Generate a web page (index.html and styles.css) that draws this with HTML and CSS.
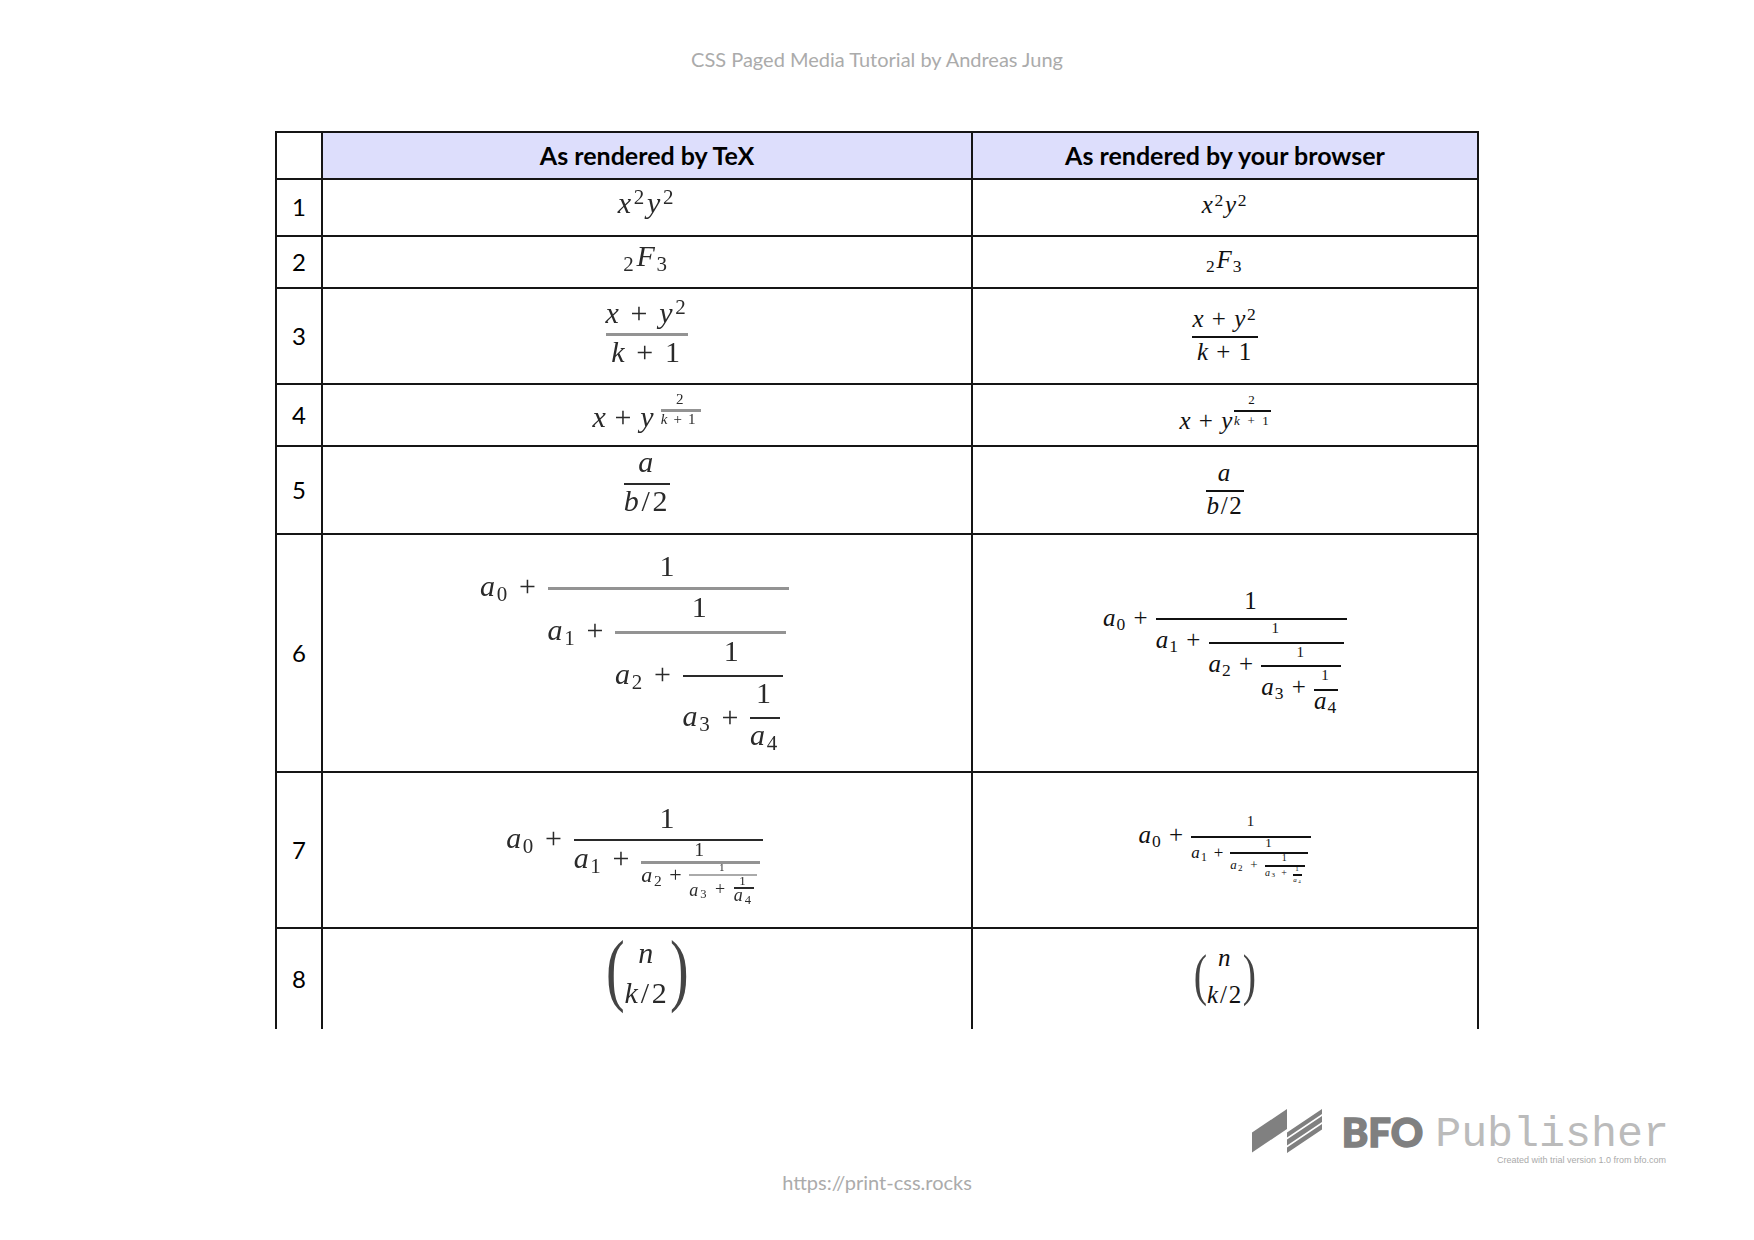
FILE: index.html
```html
<!DOCTYPE html>
<html lang="en">
<head>
<meta charset="utf-8">
<title>CSS Paged Media Tutorial</title>
<link rel="stylesheet" href="styles.css">
</head>
<body>
<div class="page">
  <header class="running">CSS Paged Media Tutorial by Andreas Jung</header>
  <table class="sheet">
    <colgroup><col class="c0"><col class="c1"><col class="c2"></colgroup>
    <tr class="h0"><th class="blank"></th><th>As rendered by TeX</th><th>As rendered by your browser</th></tr>
    <tr class="h1"><td class="n">1</td>
      <td class="tex p7"><i>x</i><span class="sp">2</span><i>y</i><span class="sp">2</span></td>
      <td class="mml p12"><i>x</i><span class="sp">2</span><i>y</i><span class="sp">2</span></td></tr>
    <tr class="h2"><td class="n">2</td>
      <td class="tex p4"><span class="sb">2</span><i>F</i><span class="sb">3</span></td>
      <td class="mml p10"><span class="sb">2</span><i>F</i><span class="sb">3</span></td></tr>
    <tr class="h3"><td class="n">3</td>
      <td class="tex p8"><span class="frac"><span class="num nq"><i>x</i><span class="op">+</span><i>y</i><span class="sp">2</span></span><span class="den bar-g"><i>k</i><span class="op">+</span>1</span></span></td>
      <td class="mml p17"><span class="frac"><span class="num"><i>x</i><span class="op">+</span><i>y</i><span class="sp">2</span></span><span class="den"><i>k</i><span class="op">+</span>1</span></span></td></tr>
    <tr class="h4"><td class="n">4</td>
      <td class="tex p7"><i>x</i><span class="op op2">+</span><i>y</i><span class="frac sf"><span class="num">2</span><span class="den bar-g"><i>k</i>+1</span></span></td>
      <td class="mml p8"><i>x</i><span class="op">+</span><i>y</i><span class="frac sf"><span class="num">2</span><span class="den"><i>k</i><span class="op">+</span>1</span></span></td></tr>
    <tr class="h5"><td class="n">5</td>
      <td class="tex p0"><span class="frac"><span class="num"><i>a</i></span><span class="den last"><i>b</i>/2</span></span></td>
      <td class="mml p13"><span class="frac"><span class="num"><i>a</i></span><span class="den"><i>b</i>/2</span></span></td></tr>
    <tr class="h6"><td class="n">6</td>
      <td class="tex p16 off"><i>a</i><span class="sb">0</span><span class="op">+</span><span class="frac"><span class="num">1</span><span class="den bar-g"><i>a</i><span class="sb">1</span><span class="op">+</span><span class="frac nest"><span class="num">1</span><span class="den bar-g"><i>a</i><span class="sb">2</span><span class="op">+</span><span class="frac nest"><span class="num">1</span><span class="den"><i>a</i><span class="sb">3</span><span class="op">+</span><span class="frac nest"><span class="num">1</span><span class="den last"><i>a</i><span class="sb">4</span></span></span></span></span></span></span></span></span></td>
      <td class="mml p53"><i>a</i><span class="sb">0</span><span class="op">+</span><span class="frac"><span class="num">1</span><span class="den"><i>a</i><span class="sb">1</span><span class="op">+</span><span class="frac nest low"><span class="num sm">1</span><span class="den"><i>a</i><span class="sb">2</span><span class="op">+</span><span class="frac nest low"><span class="num sm">1</span><span class="den"><i>a</i><span class="sb">3</span><span class="op">+</span><span class="frac nest low"><span class="num sm">1</span><span class="den last"><i>a</i><span class="sb">4</span></span></span></span></span></span></span></span></td></tr>
    <tr class="h7"><td class="n">7</td>
      <td class="tex p30 off"><i>a</i><span class="sb">0</span><span class="op">+</span><span class="frac"><span class="num">1</span><span class="den"><i>a</i><span class="sb">1</span><span class="op">+</span><span class="frac nest t2"><span class="num">1</span><span class="den bar-g"><i>a</i><span class="sb">2</span><span class="op">+</span><span class="frac nest t3"><span class="num">1</span><span class="den bar-l"><i>a</i><span class="sb">3</span><span class="op">+</span><span class="frac nest t4"><span class="num">1</span><span class="den"><i>a</i><span class="sb">4</span></span></span></span></span></span></span></span></span></td>
      <td class="mml p41"><i>a</i><span class="sb">0</span><span class="op">+</span><span class="frac u1"><span class="num">1</span><span class="den"><i>a</i><span class="sb">1</span><span class="op">+</span><span class="frac nest u2"><span class="num">1</span><span class="den"><i>a</i><span class="sb">2</span><span class="op">+</span><span class="frac nest u3"><span class="num">1</span><span class="den"><i>a</i><span class="sb">3</span><span class="op">+</span><span class="frac nest u4"><span class="num">1</span><span class="den"><i>a</i><span class="sb">4</span></span></span></span></span></span></span></span></td></tr>
    <tr class="h8"><td class="n">8</td>
      <td class="tex p9"><span class="binom"><span class="pl">(</span><span class="stack"><i>n</i><span class="k"><i>k</i>/2</span></span><span class="pr">)</span></span></td>
      <td class="mml p16"><span class="binom"><span class="pl">(</span><span class="stack"><i>n</i><span class="k"><i>k</i>/2</span></span><span class="pr">)</span></span></td></tr>
  </table>
  <div class="brand">
    <div class="brand-main">
      <svg class="mark" width="70" height="44" viewBox="0 0 70 44" aria-hidden="true">
        <path fill="#808080" d="M0 23.5 35 0V20L0 43.5Z"/>
        <path fill="#808080" d="M35 23.5 70 0V5L35 28.5ZM35 30.5 70 7V13L35 36.5ZM35 38.5 70 15V20.5L35 44Z"/>
      </svg>
      <span class="bfo">BFO</span><span class="pub">Publisher</span>
    </div>
    <div class="trial">Created with trial version 1.0 from bfo.com</div>
  </div>
  <footer class="url">https://print-css.rocks</footer>
</div>
</body>
</html>
```
FILE: styles.css
```css
html, body { margin: 0; padding: 0; background: #fff; }
.page { width: 1754px; height: 1240px; overflow: hidden; font-family: Lato, "Liberation Sans", sans-serif; }
.running { height: 131px; box-sizing: border-box; padding-top: 47px; text-align: center; font-size: 20px; line-height: 24px; color: #ababab; }
.url { margin-top: 5px; text-align: center; font-size: 20px; line-height: 24px; color: #ababab; }

.sheet { border-collapse: collapse; table-layout: fixed; width: 1202px; margin-left: 275px; color: #000; }
.c0 { width: 46px; } .c1 { width: 650px; } .c2 { width: 506px; }
.sheet th, .sheet td { border: 2px solid #151515; padding: 0; text-align: center; }
.sheet th { background: #dddefc; font-size: 25px; font-weight: 700; padding-bottom: 2px; }
.sheet th.blank { background: #fff; }
.h8 td { border-bottom: 0; }
.h0 { height: 47px; } .h1 { height: 57px; } .h2 { height: 52px; } .h3 { height: 96px; }
.h4 { height: 62px; } .h5 { height: 88px; } .h6 { height: 238px; } .h7 { height: 156px; } .h8 { height: 101px; }
.sheet .n { font-size: 24px; vertical-align: middle; padding-bottom: 2px; }

.sheet .tex, .sheet .mml { vertical-align: top; font-family: "Liberation Serif", serif; white-space: nowrap; line-height: 1; }
.sheet .tex { font-size: 30px; color: #2a2a2a; letter-spacing: .09em; }
.sheet .mml { font-size: 25px; color: #111; letter-spacing: .07em; }
.tex > * { filter: blur(.35px); }
.off { padding-right: 25px !important; }

.p0 { padding-top: 0 !important; } .p4 { padding-top: 4px !important; } .p7 { padding-top: 7px !important; }
.p8 { padding-top: 8px !important; } .p9 { padding-top: 9px !important; } .p10 { padding-top: 10px !important; } .p12 { padding-top: 12px !important; } .p13 { padding-top: 13px !important; }
.p16 { padding-top: 16px !important; } .p17 { padding-top: 17px !important; } .p30 { padding-top: 30px !important; }
.p41 { padding-top: 41px !important; } .p53 { padding-top: 53px !important; }

.sp, .sb { font-size: .7em; font-style: normal; }
.sp { vertical-align: .42em; }
.sb { vertical-align: -.22em; margin-left: -.05em; }
.op { margin: 0 .3em; font-style: normal; }
.op.op2 { margin: 0 .2em; }
.mml .op { margin: 0 .26em; }

.frac { display: inline-flex; flex-direction: column; text-align: center; line-height: 1; vertical-align: .68em; }
.num { display: block; padding-bottom: .2em; }
.num.nq { padding-bottom: .16em; }
.den { display: block; border-top: 2px solid currentColor; padding-top: .06em; white-space: nowrap; }
.den.last { padding-top: .03em; }
.bar-g { border-top: 3px solid #939393; }
.bar-l { border-top-color: #aaa; }
.nest { margin-right: 3px; }
.tex .nest { vertical-align: .78em; }
.nest > .num { padding-bottom: .3em; }
.mml .frac { vertical-align: .68em; }
.mml .num { padding-bottom: .2em; }
.mml .den { padding-top: .04em; }
.mml .den.last { padding-top: 0; line-height: .8; }
.mml .low { vertical-align: .6em; }
.mml .num.sm { font-size: .6em; padding-bottom: .38em; }

/* exponent fractions in row 4 */
.tex .sf { font-size: .5em; vertical-align: 1.53em; margin-left: .3em; }
.tex .sf > .num { padding-bottom: .1em; }
.tex .sf > .den { padding-top: 0; letter-spacing: .4em; }
.mml .sf { font-size: .52em; vertical-align: 1.92em; margin-left: 0; }
.mml .sf > .num { padding-bottom: .3em; }
.mml .sf > .den { padding-top: .15em; }
.mml .sf .op { margin: 0 .45em; }

/* shrinking levels of the compact continued fraction, TeX side */
.tex .t2 { font-size: 22px; vertical-align: .56em; }
.t2 > .num { font-size: .9em; line-height: .7; padding-bottom: .24em; }
.t2 > .den { padding-top: 0; line-height: .7; }
.t2 > .den > .op { margin: 0 .22em; }
.tex .t3 { font-size: 18px; vertical-align: .6em; }
.t3 > .num { font-size: .62em; line-height: .7; padding-bottom: .12em; }
.t3 > .den { padding-top: 0; }
.t3 > .den > .op { margin: 0 .32em; }
.tex .t4 { font-size: 18px; vertical-align: .6em; }
.t4 > .num { font-size: .72em; line-height: .7; padding-bottom: .2em; }
.t4 > .den { padding-top: 0; line-height: .75; }

/* same, browser side */
.mml .u1 > .num { font-size: 15px; padding-bottom: .44em; }
.mml .u1 > .den { font-size: 17px; padding-top: 0; }
.mml .u1 > .den > .op { margin: 0 .3em; }
.mml .u2 { font-size: 13px; vertical-align: .87em; }
.mml .u2 > .num { line-height: .7; padding-bottom: .4em; }
.mml .u2 > .den { padding-top: 0; }
.mml .u2 > .den > .op { margin: 0 .45em; }
.mml .u3 { font-size: 10px; vertical-align: .8em; }
.mml .u3 > .num { line-height: .7; padding-bottom: .4em; }
.mml .u3 > .den { padding-top: 0; }
.mml .u3 > .den > .op { margin: 0 .45em; }
.mml .u4 { font-size: 7px; vertical-align: .71em; }
.mml .u4 > .num { line-height: .7; padding-bottom: .28em; }
.mml .u4 > .den { padding-top: .2em; }

.binom { display: inline-flex; align-items: center; }
.pl, .pr { display: block; width: .333em; letter-spacing: 0; text-align: center; transform: scaleX(.7); color: #444; }
.tex .pl, .tex .pr { font-size: 80px; line-height: 72px; height: 72px; margin: -8px -.045em 0; }
.mml .pl, .mml .pr { font-size: 57px; line-height: 51px; height: 51px; margin: -3px -.055em 0; }
.stack { display: flex; flex-direction: column; align-items: center; }
.k { display: block; margin-top: .32em; }
.mml .k { margin-top: .48em; }

.brand { margin: 86px 88px 0 0; display: flex; flex-direction: column; align-items: flex-end; }
.brand-main { display: flex; align-items: center; height: 40px; margin-right: -3px; }
.mark { margin: 0 20px 8px 0; display: block; }
.bfo { font-weight: 900; font-size: 40px; color: #808080; line-height: 40px; margin: 0 12px 6px 0; -webkit-text-stroke: 1.5px #808080; }
.pub { font-family: "Liberation Mono", monospace; font-size: 43.3px; color: #bbb; line-height: 40px; }
.trial { font-family: "Liberation Sans", sans-serif; font-size: 9px; line-height: 10px; color: #aaa; }
```
